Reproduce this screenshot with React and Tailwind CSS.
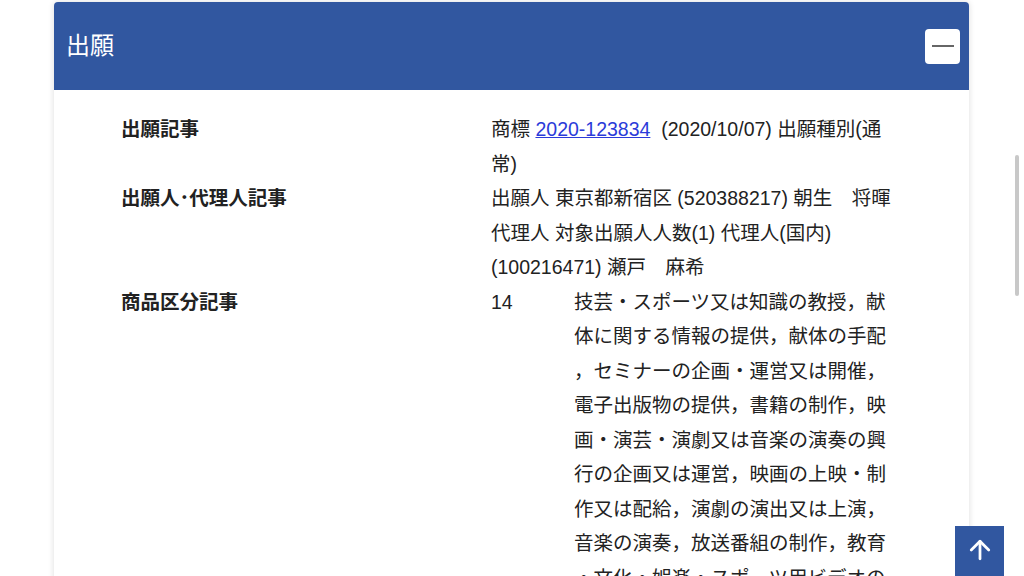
import { ArrowUp } from 'lucide-react';

const font = { fontFamily: '"Liberation Sans", "Noto Sans CJK JP", sans-serif' };

const classLines = [
  '技芸・スポーツ又は知識の教授，献',
  '体に関する情報の提供，献体の手配',
  '，セミナーの企画・運営又は開催，',
  '電子出版物の提供，書籍の制作，映',
  '画・演芸・演劇又は音楽の演奏の興',
  '行の企画又は運営，映画の上映・制',
  '作又は配給，演劇の演出又は上演，',
  '音楽の演奏，放送番組の制作，教育',
  '・文化・娯楽・スポーツ用ビデオの',
  '制作（映画・放送番組・広告用のも',
];

function Row({ label, children }) {
  return (
    <>
      <div className="font-bold">{label}</div>
      <div>{children}</div>
    </>
  );
}

export default function App() {
  return (
    <div className="relative h-[576px] overflow-hidden bg-white text-[#222]" style={font}>
      {/* Card */}
      <div className="ml-[54px] mt-[2px] w-[915px] rounded-t-[4px] shadow-[0_0_6px_rgba(0,0,0,0.14)]">
        <div className="flex h-[88px] items-center justify-between rounded-t-[4px] bg-[#3157a0] pl-[12px] pr-[9px]">
          <h2 className="text-[24px] text-white">出願</h2>
          <button className="flex h-[35px] w-[35px] items-center justify-center rounded-[4px] bg-white">
            <span className="block h-[2px] w-[22px] bg-[#666]" />
          </button>
        </div>

        <div className="grid grid-cols-[370px_400px] bg-white pb-10 pl-[67px] pt-[22px] text-[19.5px] leading-[34.5px]">
          <Row label="出願記事">
            <div className="whitespace-nowrap">
              商標{' '}
              <a href="#" className="text-[#2b3bd9] underline">2020-123834</a>
              {'\u00a0 '}(2020/10/07) 出願種別(通
            </div>
            <div>常)</div>
          </Row>

          <Row label="出願人･代理人記事">
            <div className="whitespace-nowrap">出願人 東京都新宿区 (520388217) 朝生　将暉</div>
            <div className="whitespace-nowrap">代理人 対象出願人人数(1) 代理人(国内)</div>
            <div className="whitespace-nowrap">(100216471) 瀬戸　麻希</div>
          </Row>

          <Row label="商品区分記事">
            <div className="flex">
              <div className="w-[83px] shrink-0">14</div>
              <div>
                {classLines.map((line, i) => (
                  <div key={i} className="whitespace-nowrap">{line}</div>
                ))}
              </div>
            </div>
          </Row>
        </div>
      </div>

      {/* overlay scrollbar */}
      <div className="absolute right-[5px] top-[155px] h-[141px] w-[4px] rounded-full bg-[#c8c8c8]" />

      {/* back to top */}
      <button className="absolute bottom-0 left-[955px] flex h-[50px] w-[49px] items-start justify-center bg-[#3157a0] pt-[9px] text-white">
        <ArrowUp size={30} strokeWidth={2.2} />
      </button>
    </div>
  );
}
